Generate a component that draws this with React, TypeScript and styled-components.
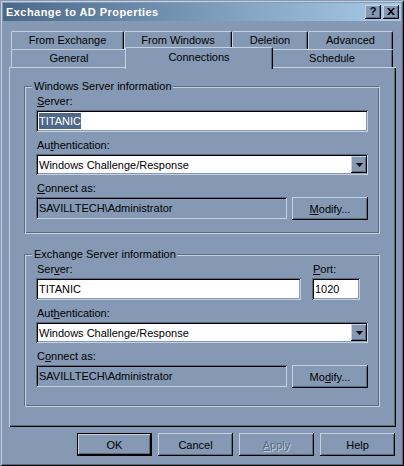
import React from "react";
import styled, { createGlobalStyle } from "styled-components";

const GlobalStyle = createGlobalStyle`
  html, body {
    margin: 0;
    padding: 0;
    background: #8599b4;
  }
  body {
    font-family: "Liberation Sans", Arial, sans-serif;
    font-size: 11px;
    color: #000;
  }
`;

const Window = styled.div`
  width: 404px;
  height: 466px;
  box-sizing: border-box;
  padding: 3px;
  background: #8599b4;
  box-shadow: inset 1px 1px 0 #8599b4, inset -1px -1px 0 #000,
    inset 2px 2px 0 #c6d2e0, inset -2px -2px 0 #5a6a80;
  display: flex;
  flex-direction: column;
`;

const TitleBar = styled.div`
  height: 18px;
  display: flex;
  align-items: center;
  padding: 0 2px 0 3px;
  background: linear-gradient(to right, #4b6888, #a8cbea);
`;

const Title = styled.span`
  color: #fff;
  font-weight: bold;
  font-size: 11px;
  letter-spacing: 0.45px;
`;

const CaptionButtons = styled.div`
  margin-left: auto;
  display: flex;
  gap: 2px;
`;

const CaptionButton = styled.div`
  width: 16px;
  height: 14px;
  box-sizing: border-box;
  background: #8599b4;
  box-shadow: inset -1px -1px 0 #000, inset 1px 1px 0 #c6d2e0,
    inset -2px -2px 0 #5a6a80;
  display: flex;
  align-items: center;
  justify-content: center;
  font-weight: bold;
  font-size: 11px;
  line-height: 1;
  padding-bottom: 1px;
`;

const Tabs = styled.div`
  margin: 10px 0 0 8px;
  width: 382px;
  display: flex;
  flex-direction: column;
`;

const TabRow = styled.div`
  display: flex;
  height: 18px;
  align-items: flex-end;
`;

const Tab = styled.div<{ $w: number; $selected?: boolean }>`
  box-sizing: border-box;
  width: ${(p) => p.$w + (p.$selected ? 4 : 0)}px;
  height: ${(p) => (p.$selected ? 22 : 18)}px;
  margin: ${(p) => (p.$selected ? "0 -2px -2px -2px" : "0")};
  position: relative;
  z-index: ${(p) => (p.$selected ? 1 : 0)};
  background: #8599b4;
  border-top: 1px solid #c6d2e0;
  border-left: 1px solid #c6d2e0;
  border-right: 1px solid #000;
  border-top-left-radius: 2px;
  border-top-right-radius: 2px;
  box-shadow: inset -1px 0 0 #5a6a80;
  display: flex;
  justify-content: center;
  padding-top: ${(p) => (p.$selected ? 3 : 2)}px;
  line-height: 13px;
`;

const Panel = styled.div`
  margin-left: 6px;
  width: 387px;
  box-sizing: border-box;
  padding: 19px 16px 20px 15px;
  background: #8599b4;
  box-shadow: inset 1px 1px 0 #c6d2e0, inset -1px -1px 0 #000,
    inset -2px -2px 0 #5a6a80;
  display: flex;
  flex-direction: column;
  gap: 20px;
`;

const GroupBox = styled.div<{ $bottom: number }>`
  position: relative;
  border: 1px solid #5a6a80;
  border-right-color: #c6d2e0;
  border-bottom-color: #c6d2e0;
  box-shadow: inset 1px 1px 0 #c6d2e0, inset -1px -1px 0 #5a6a80;
  padding: 8px 11px ${(p) => p.$bottom}px 11px;
  display: flex;
  flex-direction: column;
  gap: 7px;
`;

const Legend = styled.span`
  position: absolute;
  top: -7px;
  left: 7px;
  padding: 0 1px 0 2px;
  background: #8599b4;
  line-height: 13px;
`;

const Field = styled.div<{ $w?: number }>`
  display: flex;
  flex-direction: column;
  gap: 2px;
  width: ${(p) => (p.$w ? `${p.$w}px` : "auto")};
`;

const Label = styled.label`
  line-height: 13px;
  padding-left: 1px;
`;

const Sunken = styled.div<{ $h: number; $face?: boolean }>`
  box-sizing: border-box;
  height: ${(p) => p.$h}px;
  background: ${(p) => (p.$face ? "#8599b4" : "#fff")};
  box-shadow: inset 1px 1px 0 #5a6a80, inset -1px -1px 0 #c6d2e0,
    inset 2px 2px 0 #000, inset -2px -2px 0 #8599b4;
  display: flex;
  align-items: center;
  padding: 2px 2px 2px 3px;
  white-space: nowrap;
  overflow: hidden;
`;

const ReadOnly = styled(Sunken)`
  flex: 1;
`;

const Selected = styled.span`
  background: #4f6889;
  color: #fff;
  line-height: 16px;
`;

const ComboText = styled.span`
  flex: 1;
`;

const DropButton = styled.div`
  width: 16px;
  height: 17px;
  margin-right: -1px;
  box-sizing: border-box;
  background: #8599b4;
  box-shadow: inset -1px -1px 0 #000, inset 1px 1px 0 #c6d2e0,
    inset -2px -2px 0 #5a6a80;
  display: flex;
  align-items: center;
  justify-content: center;
`;

const Row = styled.div<{ $gap: number }>`
  display: flex;
  align-items: flex-start;
  gap: ${(p) => p.$gap}px;
`;

const Button = styled.button<{ $w: number; $default?: boolean }>`
  width: ${(p) => p.$w}px;
  height: 23px;
  flex: none;
  box-sizing: border-box;
  padding: 0;
  margin: 0;
  font: inherit;
  color: #000;
  background: #8599b4;
  border: ${(p) => (p.$default ? "1px solid #000" : "none")};
  box-shadow: inset -1px -1px 0 #000, inset 1px 1px 0 #c6d2e0,
    inset -2px -2px 0 #5a6a80;
  &:disabled {
    color: #5a6a80;
    text-shadow: 1px 1px 0 #c6d2e0;
  }
`;

const ButtonRow = styled.div`
  display: flex;
  justify-content: flex-end;
  gap: 6px;
  margin-top: 6px;
  padding-right: 6px;
`;

const Arrow = () => (
  <svg width="7" height="4" viewBox="0 0 7 4">
    <path d="M0 0h7L3.5 4z" fill="#000" />
  </svg>
);

const CloseGlyph = () => (
  <svg width="8" height="7" viewBox="0 0 8 7">
    <path d="M0 0h2l2 2.3L6 0h2L5 3.5 8 7H6L4 4.7 2 7H0l3-3.5z" fill="#000" />
  </svg>
);

const Combo: React.FC<{ value: string }> = ({ value }) => (
  <Sunken $h={21}>
    <ComboText>{value}</ComboText>
    <DropButton>
      <Arrow />
    </DropButton>
  </Sunken>
);

const App: React.FC = () => {
  return (
    <>
      <GlobalStyle />
      <Window>
        <TitleBar>
          <Title>Exchange to AD Properties</Title>
          <CaptionButtons>
            <CaptionButton>?</CaptionButton>
            <CaptionButton>
              <CloseGlyph />
            </CaptionButton>
          </CaptionButtons>
        </TitleBar>

        <Tabs>
          <TabRow>
            <Tab $w={113}>From Exchange</Tab>
            <Tab $w={108}>From Windows</Tab>
            <Tab $w={76}>Deletion</Tab>
            <Tab $w={85}>Advanced</Tab>
          </TabRow>
          <TabRow>
            <Tab $w={116}>General</Tab>
            <Tab $w={144} $selected>
              Connections
            </Tab>
            <Tab $w={122}>Schedule</Tab>
          </TabRow>
        </Tabs>

        <Panel>
          <GroupBox $bottom={13}>
            <Legend>Windows Server information</Legend>
            <Field>
              <Label>
                <u>S</u>erver:
              </Label>
              <Sunken $h={22}>
                <Selected>TITANIC</Selected>
              </Sunken>
            </Field>
            <Field>
              <Label>
                Au<u>t</u>hentication:
              </Label>
              <Combo value="Windows Challenge/Response" />
            </Field>
            <Field>
              <Label>
                <u>C</u>onnect as:
              </Label>
              <Row $gap={5}>
                <ReadOnly $h={22} $face>
                  {"SAVILLTECH\\Administrator"}
                </ReadOnly>
                <Button $w={76}>
                  <u>M</u>odify...
                </Button>
              </Row>
            </Field>
          </GroupBox>

          <GroupBox $bottom={18}>
            <Legend>Exchange Server information</Legend>
            <Row $gap={11}>
              <Field $w={265}>
                <Label>
                  Ser<u>v</u>er:
                </Label>
                <Sunken $h={22}>TITANIC</Sunken>
              </Field>
              <Field $w={48}>
                <Label>
                  <u>P</u>ort:
                </Label>
                <Sunken $h={22}>1020</Sunken>
              </Field>
            </Row>
            <Field>
              <Label>
                Aut<u>h</u>entication:
              </Label>
              <Combo value="Windows Challenge/Response" />
            </Field>
            <Field>
              <Label>
                C<u>o</u>nnect as:
              </Label>
              <Row $gap={5}>
                <ReadOnly $h={22} $face>
                  {"SAVILLTECH\\Administrator"}
                </ReadOnly>
                <Button $w={76}>
                  Mo<u>d</u>ify...
                </Button>
              </Row>
            </Field>
          </GroupBox>
        </Panel>

        <ButtonRow>
          <Button $w={75} $default>
            OK
          </Button>
          <Button $w={75}>Cancel</Button>
          <Button $w={75} disabled>
            <u>A</u>pply
          </Button>
          <Button $w={75}>Help</Button>
        </ButtonRow>
      </Window>
    </>
  );
};

export default App;
